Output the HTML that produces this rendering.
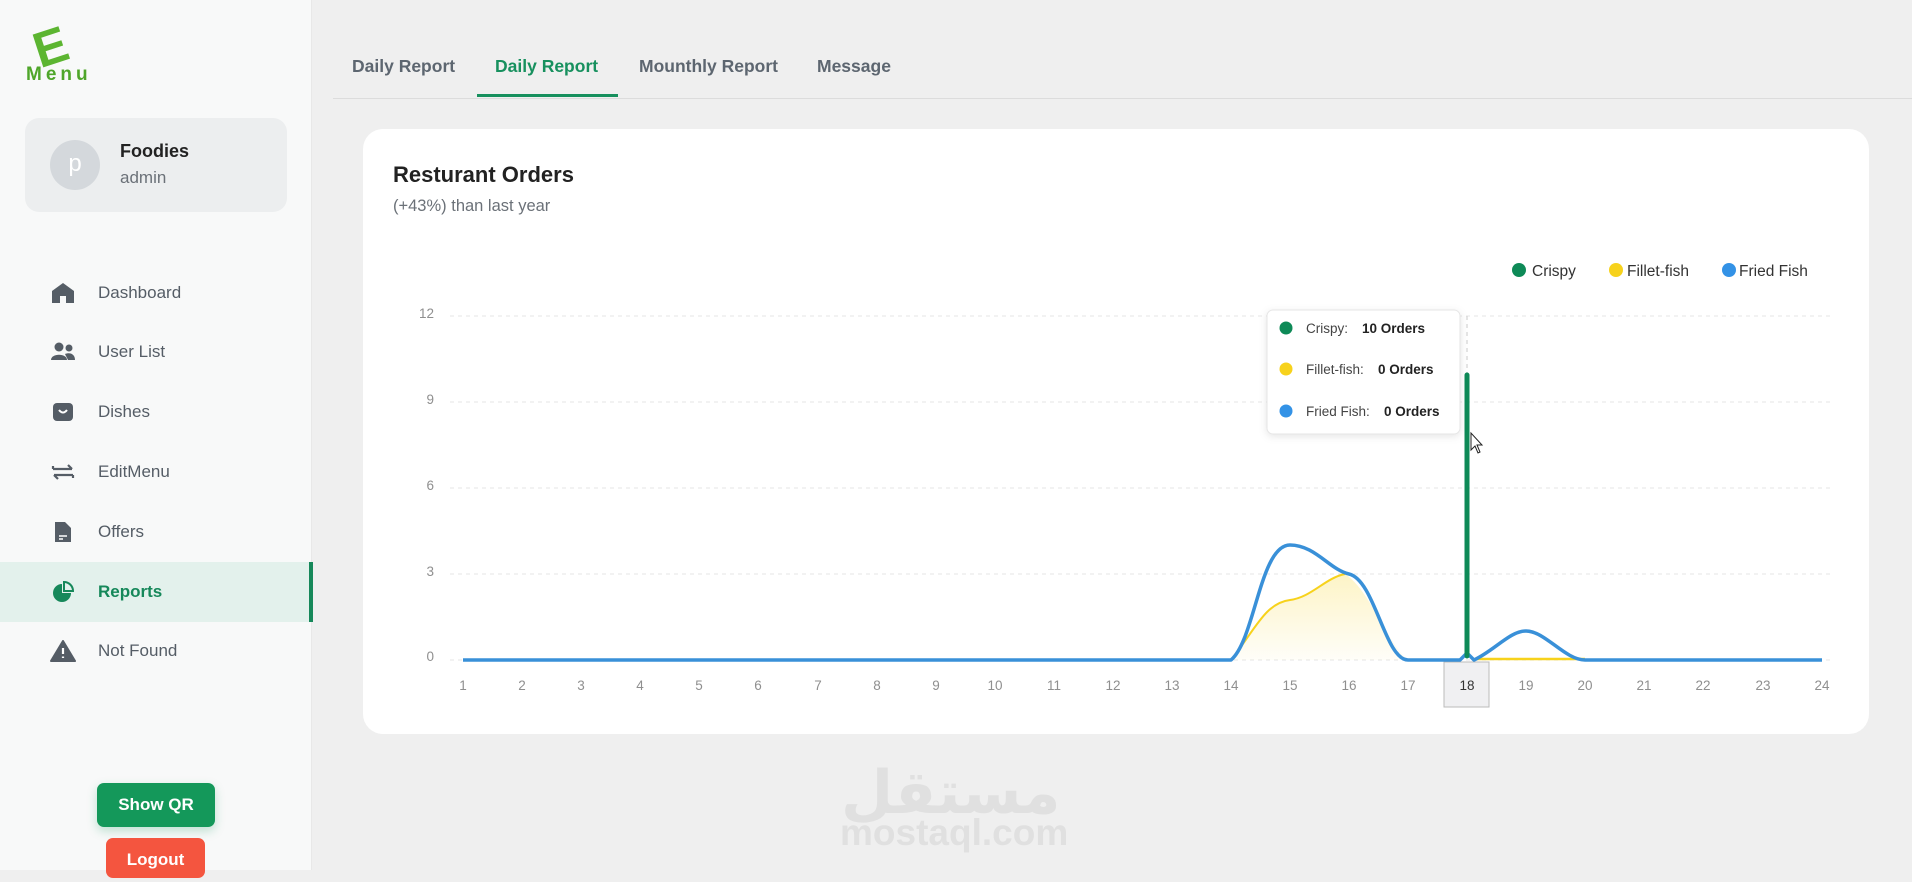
<!DOCTYPE html>
<html><head><meta charset="utf-8"><style>
*{margin:0;padding:0;box-sizing:border-box}
body{width:1912px;height:870px;overflow:hidden;background:#efefef;font-family:"Liberation Sans",sans-serif;position:relative}
.side{position:absolute;left:0;top:0;width:312px;height:870px;background:#f8f9f9;border-right:1px solid #e8e8e8}
.abs{position:absolute}
.nav{position:absolute;left:0;width:312px;height:60px;display:flex;align-items:center;font-size:17px;color:#555d66}
.nav svg{position:absolute;left:50px}
.nav span{position:absolute;left:98px}
.tab{position:absolute;top:56px;font-size:17.5px;font-weight:bold;color:#5d6670}
</style></head><body>
<div class="side">
 <div class="abs" style="left:34px;top:22px;font-size:50px;font-weight:bold;color:#5cb531;transform:rotate(-18deg);line-height:1">E</div>
 <div class="abs" style="left:26px;top:64px;font-size:19px;font-weight:bold;color:#4fa62a;letter-spacing:4px">Menu</div>
 <div class="abs" style="left:25px;top:118px;width:262px;height:94px;background:#eceeef;border-radius:14px"></div>
 <div class="abs" style="left:50px;top:140px;width:50px;height:50px;border-radius:50%;background:#d4d8dc;color:#fff;font-size:24px;text-align:center;line-height:48px">p</div>
 <div class="abs" style="left:120px;top:141px;font-size:18px;font-weight:bold;color:#222">Foodies</div>
 <div class="abs" style="left:120px;top:168px;font-size:17px;color:#6b7178">admin</div>

 <div class="nav" style="top:263px"><svg width="26" height="24" viewBox="0 0 26 24"><path d="M13 2 L24 10 V22 H16 V15 H10 V22 H2 V10 Z" fill="#555d66"/></svg><span>Dashboard</span></div>
 <div class="nav" style="top:322px"><svg width="26" height="24" viewBox="0 0 26 24"><circle cx="9" cy="7" r="4.5" fill="#555d66"/><circle cx="19" cy="8" r="3.5" fill="#555d66"/><path d="M1 20 C1 13 17 13 17 20Z M15 14 C20 12 25 14 25 20 H18Z" fill="#555d66"/></svg><span>User List</span></div>
 <div class="nav" style="top:382px"><svg width="26" height="24" viewBox="0 0 26 24"><rect x="3" y="3" width="20" height="18" rx="4" fill="#555d66"/><path d="M9 10 Q13 15 17 10" stroke="#fff" stroke-width="2" fill="none"/></svg><span>Dishes</span></div>
 <div class="nav" style="top:442px"><svg width="26" height="24" viewBox="0 0 26 24"><path d="M3 9 H22 M18 5 L22 9 M23 15 H4 M8 19 L4 15 M3 9 V6 M23 15 V18" stroke="#555d66" stroke-width="2.2" fill="none"/></svg><span>EditMenu</span></div>
 <div class="nav" style="top:502px"><svg width="26" height="24" viewBox="0 0 26 24"><path d="M5 2 H15 L21 8 V22 H5 Z" fill="#555d66"/><path d="M9 16 H17 M9 19 H13" stroke="#fff" stroke-width="1.6"/></svg><span>Offers</span></div>
 <div class="abs" style="left:0;top:562px;width:312px;height:60px;background:#e3f1ec"></div>
 <div class="abs" style="left:309px;top:562px;width:4px;height:60px;background:#16885a"></div>
 <div class="nav" style="top:562px;color:#16885a;font-weight:bold"><svg width="26" height="24" viewBox="0 0 26 24"><path d="M12 4 A9 9 0 1 0 21 13 H12 Z" fill="#16885a"/><path d="M14 2 A9 9 0 0 1 23 11 H14Z" fill="none" stroke="#16885a" stroke-width="2"/></svg><span>Reports</span></div>
 <div class="nav" style="top:621px"><svg width="26" height="24" viewBox="0 0 26 24"><path d="M13 2 L25 22 H1 Z" fill="#555d66" stroke="#555d66" stroke-linejoin="round" stroke-width="2"/><path d="M13 9 V15 M13 17.5 V19" stroke="#fff" stroke-width="2.2"/></svg><span>Not Found</span></div>

 <div class="abs" style="left:97px;top:783px;width:118px;height:44px;background:#14985a;border-radius:7px;color:#fff;font-weight:bold;font-size:17px;text-align:center;line-height:44px;box-shadow:0 4px 10px rgba(20,152,90,.25)">Show QR</div>
 <div class="abs" style="left:106px;top:838px;width:99px;height:40px;background:#f4553f;border-radius:7px;color:#fff;font-weight:bold;font-size:17px;text-align:center;line-height:44px">Logout</div>
</div>

<div class="tab" style="left:352px">Daily Report</div>
<div class="tab" style="left:495px;color:#17905e">Daily Report</div>
<div class="tab" style="left:639px">Mounthly Report</div>
<div class="tab" style="left:817px">Message</div>
<div class="abs" style="left:333px;top:98px;width:1579px;height:1px;background:#dcdcdc"></div>
<div class="abs" style="left:477px;top:94px;width:141px;height:3px;background:#17905e"></div>

<div class="abs" style="left:841px;top:744px;font-size:60px;font-weight:bold;color:#e0e0e0;font-family:'Noto Sans CJK SC','DejaVu Sans',sans-serif">مستقل</div>
<div class="abs" style="left:840px;top:812px;font-size:37px;font-weight:bold;color:#e0e0e0">mostaql.com</div>

<div class="abs" style="left:363px;top:129px;width:1506px;height:605px;background:#fff;border-radius:20px"></div>
<div class="abs" style="left:393px;top:162px;font-size:22px;font-weight:bold;color:#222">Resturant Orders</div>
<div class="abs" style="left:393px;top:197px;font-size:16.5px;color:#6b7178">(+43%) than last year</div>

<svg class="abs" style="left:0;top:0" width="1912" height="870" font-family="Liberation Sans, sans-serif">
 <g font-size="15.5" fill="#333">
  <circle cx="1519" cy="270" r="7" fill="#0e8a57"/><text x="1532" y="276">Crispy</text>
  <circle cx="1616" cy="270" r="7" fill="#f7d21c"/><text x="1627" y="276">Fillet-fish</text>
  <circle cx="1729" cy="270" r="7" fill="#3392e6"/><text x="1739" y="276">Fried Fish</text>
 </g>
 <g stroke="#e6e6e6" stroke-dasharray="4 4" stroke-width="1">
  <line x1="450" y1="316" x2="1830" y2="316"/><line x1="450" y1="402" x2="1830" y2="402"/>
  <line x1="450" y1="488" x2="1830" y2="488"/><line x1="450" y1="574" x2="1830" y2="574"/>
  <line x1="450" y1="660" x2="1830" y2="660"/>
  <line x1="1467" y1="316" x2="1467" y2="660" stroke="#ccc"/>
 </g>
 <g font-size="13.5" fill="#8f8f8f" text-anchor="end">
  <text x="434" y="318">12</text><text x="434" y="404">9</text><text x="434" y="490">6</text><text x="434" y="576">3</text><text x="434" y="661">0</text>
 </g>
 <rect x="1444" y="662" width="45" height="45" fill="#f0f0f2" stroke="#bbb"/>
 <g font-size="13.5" fill="#8f8f8f" text-anchor="middle">
  <text x="463" y="690">1</text><text x="522" y="690">2</text><text x="581" y="690">3</text><text x="640" y="690">4</text><text x="699" y="690">5</text><text x="758" y="690">6</text><text x="818" y="690">7</text><text x="877" y="690">8</text><text x="936" y="690">9</text><text x="995" y="690">10</text><text x="1054" y="690">11</text><text x="1113" y="690">12</text><text x="1172" y="690">13</text><text x="1231" y="690">14</text><text x="1290" y="690">15</text><text x="1349" y="690">16</text><text x="1408" y="690">17</text><text x="1467" y="690" fill="#333">18</text><text x="1526" y="690">19</text><text x="1585" y="690">20</text><text x="1644" y="690">21</text><text x="1703" y="690">22</text><text x="1763" y="690">23</text><text x="1822" y="690">24</text>
 </g>
 <defs><linearGradient id="yg" x1="0" y1="0" x2="0" y2="1"><stop offset="0" stop-color="#f7d21c" stop-opacity=".25"/><stop offset="1" stop-color="#f7d21c" stop-opacity=".03"/></linearGradient></defs>
 <path d="M1231 660 C1255 630 1265 603 1290 600 C1312 597 1325 578 1345 574 C1370 590 1385 640 1408 660 Z" fill="url(#yg)"/>
 <path d="M1231 660 C1255 630 1265 603 1290 600 C1312 597 1325 578 1345 574" stroke="#f7d21c" stroke-width="2" fill="none"/>
 <line x1="1475" y1="659" x2="1585" y2="659" stroke="#f7d21c" stroke-width="2.5"/>
 <path d="M463 660 H1231 C1255 640 1260 545 1290 545 C1315 545 1330 570 1349 574 C1375 580 1385 660 1408 660 H1460 L1467 653 L1474 660 C1495 650 1510 631 1526 631 C1545 631 1565 660 1585 660 H1822" stroke="#3990d8" stroke-width="3.5" fill="none" stroke-linejoin="round"/>
 <line x1="1467" y1="375" x2="1467" y2="656" stroke="#0e8a57" stroke-width="5" stroke-linecap="round"/>
 <path d="M1471 433 L1471 450 L1475 446 L1478 453 L1480 452 L1477 445 L1482 445 Z" fill="#fff" stroke="#222" stroke-width="1"/>
 <rect x="1267" y="310" width="193" height="124" rx="6" fill="#fff" stroke="#e6e6e6" style="filter:drop-shadow(0 2px 4px rgba(0,0,0,.1))"/>
 <g font-size="13.5" fill="#444">
  <circle cx="1286" cy="328" r="6.5" fill="#0e8a57"/><text x="1306" y="333">Crispy:</text><text x="1362" y="333" font-weight="bold" fill="#222">10 Orders</text>
  <circle cx="1286" cy="369" r="6.5" fill="#f7d21c"/><text x="1306" y="374">Fillet-fish:</text><text x="1378" y="374" font-weight="bold" fill="#222">0 Orders</text>
  <circle cx="1286" cy="411" r="6.5" fill="#3392e6"/><text x="1306" y="416">Fried Fish:</text><text x="1384" y="416" font-weight="bold" fill="#222">0 Orders</text>
 </g>
</svg>
</body></html>
